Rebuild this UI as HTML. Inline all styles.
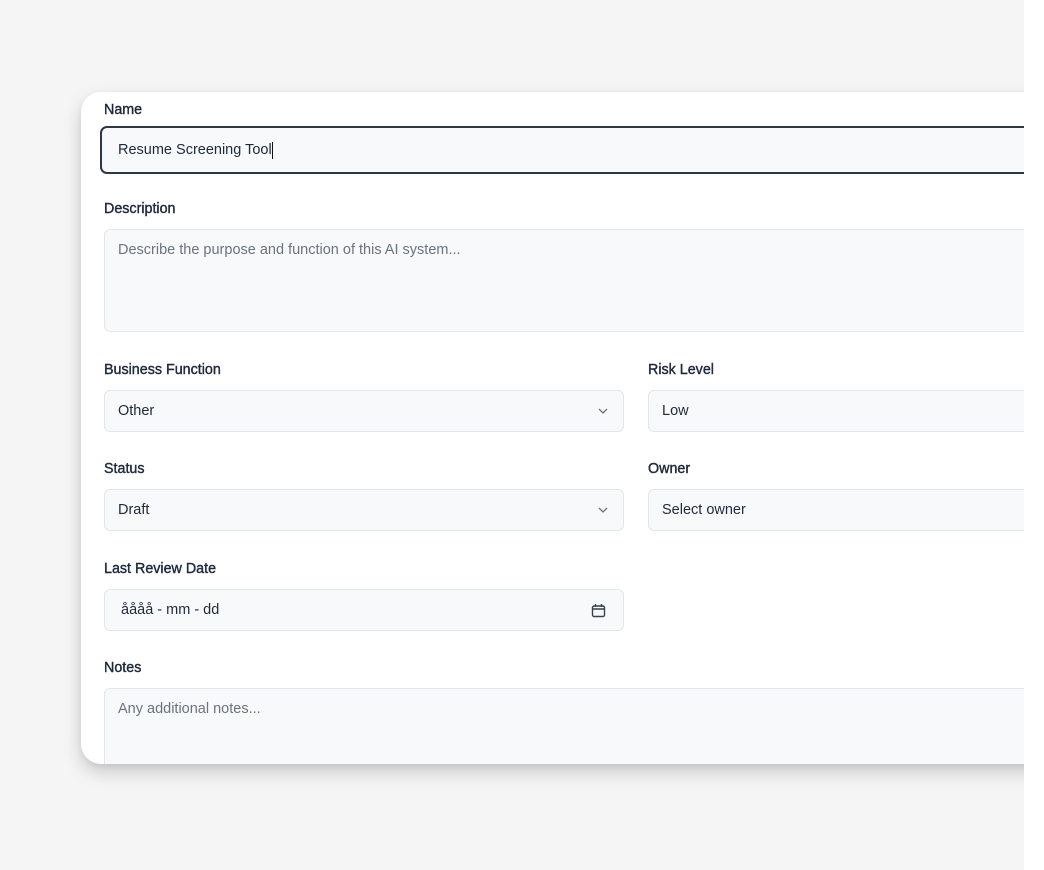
<!DOCTYPE html>
<html><head><style>
*{box-sizing:border-box;margin:0;padding:0}
body{width:1044px;height:870px;background:#fff;font-family:"Liberation Sans",sans-serif;overflow:hidden;position:relative}
.bg{position:absolute;left:0;top:0;width:1024px;height:870px;background:#f5f5f5;overflow:hidden}
.card{position:absolute;left:81px;top:92px;width:1000px;height:672px;background:#fff;border-radius:20px;box-shadow:0 8px 18px rgba(0,0,0,.18),0 2px 6px rgba(0,0,0,.06);overflow:hidden}
.lbl{position:absolute;font-size:14.3px;font-weight:normal;-webkit-text-stroke:0.4px #1e293b;color:#1e293b;left:23px}
.f{position:absolute;background:#f8f9fb;border:1px solid #e3e6ea;border-radius:6px;font-size:14.5px;color:#1e293b;padding-left:13px;display:flex;align-items:center}
.ph{color:#6b7280}
.chev{position:absolute;right:14px;top:50%;margin-top:-5px}
</style></head><body>
<div class="bg">
<div class="card">
  <div class="lbl" style="top:10px">Name</div>
  <div class="f" style="left:19px;top:34px;width:990px;height:48px;border:2px solid #2d3748;border-radius:7px;padding-left:16px">Resume Screening Tool<span style="display:inline-block;width:1px;height:17px;background:#111;margin-left:0"></span></div>
  <div class="lbl" style="top:109px">Description</div>
  <div class="f ph" style="left:23px;top:137px;width:990px;height:103px;align-items:flex-start;padding-top:12px">Describe the purpose and function of this AI system...</div>

  <div class="lbl" style="top:270px">Business Function</div>
  <div class="f" style="left:23px;top:298px;width:520px;height:42px">Other<svg class="chev" width="12" height="10" viewBox="0 0 12 10"><path d="M2 3l4 4 4-4" fill="none" stroke="#6b7280" stroke-width="1.3"/></svg></div>
  <div class="lbl" style="top:270px;left:567px">Risk Level</div>
  <div class="f" style="left:567px;top:298px;width:500px;height:42px">Low</div>

  <div class="lbl" style="top:369px">Status</div>
  <div class="f" style="left:23px;top:397px;width:520px;height:42px">Draft<svg class="chev" width="12" height="10" viewBox="0 0 12 10"><path d="M2 3l4 4 4-4" fill="none" stroke="#6b7280" stroke-width="1.3"/></svg></div>
  <div class="lbl" style="top:369px;left:567px">Owner</div>
  <div class="f" style="left:567px;top:397px;width:500px;height:42px">Select owner</div>

  <div class="lbl" style="top:469px">Last Review Date</div>
  <div class="f" style="left:23px;top:497px;width:520px;height:42px;padding-left:16px">åååå - mm - dd<svg style="position:absolute;right:17px;top:13px" width="15" height="15" viewBox="0 0 15 15"><rect x="1.5" y="3" width="12" height="10.5" rx="1.5" fill="none" stroke="#374151" stroke-width="1.4"/><path d="M1.5 6h12M4.5 1v3M10.5 1v3" stroke="#374151" stroke-width="1.4"/></svg></div>

  <div class="lbl" style="top:568px">Notes</div>
  <div class="f ph" style="left:23px;top:596px;width:990px;height:110px;align-items:flex-start;padding-top:12px">Any additional notes...</div>
</div>
</div>
</body></html>
